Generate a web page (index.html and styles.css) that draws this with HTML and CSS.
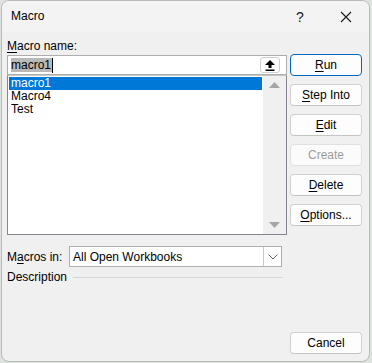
FILE: index.html
```html
<!DOCTYPE html>
<html lang="en">
<head>
    <meta charset="UTF-8">
    <title>Macro</title>
    <link rel="stylesheet" href="styles.css">
</head>
<body>
    <div class="dialog">
        <div class="titlebar">
            <span class="title">Macro</span>
            <span class="help">?</span>
            <span class="close">
                <svg width="12" height="12" viewBox="0 0 12 12"><path d="M1 1 L11 11 M11 1 L1 11" stroke="#1a1a1a" stroke-width="1.1"/></svg>
            </span>
        </div>
        <div class="content">
            <div class="left">
                <div class="label"><u>M</u>acro name:</div>
                <div class="name-box">
                    <span class="name-text"><span class="sel">macro1</span><span class="caret"></span></span>
                    <span class="up-btn">
                        <svg width="10" height="11" viewBox="0 0 10 11"><path d="M5 0 L10 5 L6.5 5 L6.5 8 L3.5 8 L3.5 5 L0 5 Z" fill="#000"/><rect x="0.5" y="9.5" width="9" height="1.5" fill="#000"/></svg>
                    </span>
                </div>
                <div class="list">
                    <div class="items">
                        <div class="item selected">macro1</div>
                        <div class="item">Macro4</div>
                        <div class="item">Test</div>
                    </div>
                    <div class="scroll">
                        <svg width="11" height="6" viewBox="0 0 11 6"><path d="M5.5 0 L11 6 L0 6 Z" fill="#a6a6a6"/></svg>
                        <svg width="11" height="6" viewBox="0 0 11 6"><path d="M0 0 L11 0 L5.5 6 Z" fill="#a6a6a6"/></svg>
                    </div>
                </div>
                <div class="macros-in">
                    <span class="label">M<u>a</u>cros in:</span>
                    <div class="combo">
                        <span class="combo-text">All Open Workbooks</span>
                        <span class="combo-btn">
                            <svg width="10" height="6" viewBox="0 0 10 6"><path d="M0.5 0.5 L5 5 L9.5 0.5" fill="none" stroke="#606060" stroke-width="1"/></svg>
                        </span>
                    </div>
                </div>
                <div class="desc">
                    <span class="label">Description</span>
                    <span class="rule"></span>
                </div>
            </div>
            <div class="right">
                <div class="buttons">
                    <button class="btn default"><u>R</u>un</button>
                    <button class="btn"><u>S</u>tep Into</button>
                    <button class="btn"><u>E</u>dit</button>
                    <button class="btn" disabled>Create</button>
                    <button class="btn"><u>D</u>elete</button>
                    <button class="btn"><u>O</u>ptions...</button>
                </div>
                <button class="btn">Cancel</button>
            </div>
        </div>
    </div>
</body>
</html>
```

FILE: styles.css
```css
* {
    margin: 0;
    padding: 0;
    box-sizing: border-box;
}

body {
    background-color: #dfe3e0;
    font-family: 'Liberation Sans', Arial, sans-serif;
    font-size: 12px;
    color: #000;
    width: 372px;
    height: 363px;
    overflow: hidden;
}

u {
    text-decoration: underline;
    text-underline-offset: 2px;
}

.dialog {
    width: 369px;
    height: 362px;
    margin-left: 1px;
    background-color: #f0f0f0;
    border: 1px solid #b9b9b9;
    border-radius: 8px;
    overflow: hidden;
    display: flex;
    flex-direction: column;
}

.titlebar {
    height: 31px;
    background-color: #f3f3f3;
    display: flex;
    align-items: center;
    padding-left: 9px;
    flex-shrink: 0;
}

.title {
    flex: 1;
    font-size: 12px;
    padding-bottom: 1px;
}

.help {
    font-size: 14px;
    width: 46px;
    text-align: center;
    color: #1a1a1a;
}

.close {
    width: 46px;
    height: 31px;
    display: flex;
    align-items: center;
    justify-content: center;
}

.content {
    flex: 1;
    display: flex;
    padding: 0 5px 7px 5px;
    gap: 3px;
}

.left {
    width: 280px;
    display: flex;
    flex-direction: column;
}

.left > .label {
    height: 14px;
    line-height: 14px;
    margin-top: 7px;
    margin-bottom: 2px;
}

.name-box {
    height: 20px;
    background-color: #fff;
    border: 1px solid #adadad;
    display: flex;
    align-items: center;
    padding-left: 3px;
}

.name-text {
    flex: 1;
    display: flex;
    align-items: center;
}

.sel {
    background-color: #b9b9b9;
    line-height: 14px;
    padding-right: 1px;
}

.caret {
    width: 1px;
    height: 15px;
    background-color: #000;
}

.up-btn {
    width: 20px;
    height: 16px;
    margin-right: 6px;
    border: 1px solid #cfcfcf;
    border-radius: 3px;
    display: flex;
    align-items: center;
    justify-content: center;
}

.list {
    height: 160px;
    background-color: #fff;
    border: 1px solid #828790;
    border-top-color: #c8c8c8;
    display: flex;
}

.items {
    flex: 1;
    padding: 1px 1px;
}

.item {
    height: 13px;
    line-height: 13px;
    padding-left: 2px;
}

.item.selected {
    background-color: #0078d7;
    color: #fff;
}

.scroll {
    width: 23px;
    background-color: #f0f0f0;
    display: flex;
    flex-direction: column;
    align-items: center;
    justify-content: space-between;
    padding: 6px 0 6px;
}

.macros-in {
    display: flex;
    align-items: center;
    margin-top: 11px;
    height: 21px;
}

.macros-in .label {
    width: 62px;
}

.combo {
    width: 213px;
    height: 21px;
    background-color: #fff;
    border: 1px solid #adadad;
    display: flex;
    align-items: center;
    padding-left: 3px;
}

.combo-text {
    flex: 1;
}

.combo-btn {
    width: 18px;
    height: 19px;
    border-left: 1px solid #c8c8c8;
    display: flex;
    align-items: center;
    justify-content: center;
}

.desc {
    display: flex;
    align-items: center;
    margin-top: 2px;
    height: 16px;
}

.rule {
    flex: 1;
    height: 1px;
    background-color: #d6d6d6;
    margin-left: 6px;
    margin-right: 4px;
}

.right {
    width: 72px;
    display: flex;
    flex-direction: column;
    justify-content: space-between;
    padding-top: 22px;
}

.buttons {
    display: flex;
    flex-direction: column;
    gap: 8px;
}

.btn {
    width: 72px;
    height: 22px;
    background-color: #fdfdfd;
    border: 1px solid #d0d0d0;
    border-bottom-color: #c4c4c4;
    border-radius: 4px;
    font-family: 'Liberation Sans', Arial, sans-serif;
    font-size: 12px;
    color: #000;
}

.btn.default {
    border: 1px solid #0067c0;
}

.btn:disabled {
    color: #9d9d9d;
    background-color: #fbfbfb;
    border-color: #e0e0e0;
}
```
